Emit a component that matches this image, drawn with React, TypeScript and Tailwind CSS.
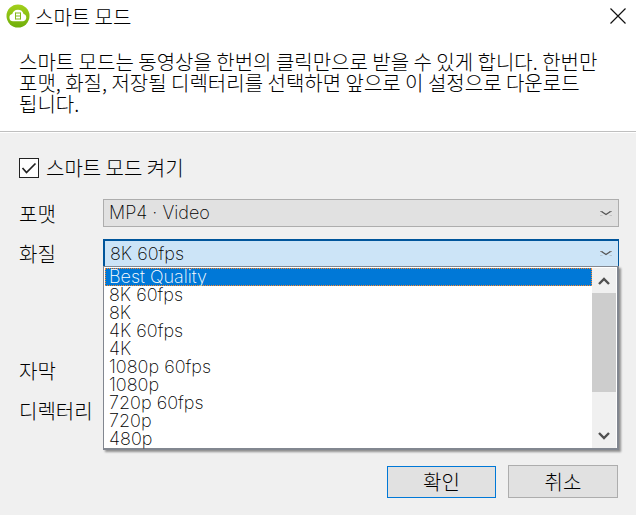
import { useState } from "react";

const qualities = [
    "Best Quality",
    "8K 60fps",
    "8K",
    "4K 60fps",
    "4K",
    "1080p 60fps",
    "1080p",
    "720p 60fps",
    "720p",
    "480p",
];

function Logo() {
    return (
        <svg className="h-6 w-6 shrink-0" viewBox="0 0 24 24" aria-hidden="true">
            <defs>
                <linearGradient id="logo" x1="0" y1="0" x2="0" y2="1">
                    <stop offset="0" stopColor="#a3d01c" />
                    <stop offset="1" stopColor="#6fae0a" />
                </linearGradient>
            </defs>
            <circle cx="12" cy="12" r="11.5" fill="url(#logo)" />
            <path
                d="M7 17.2a3.6 3.6 0 0 1-.8-7.1A5.9 5.9 0 0 1 17.6 10a3.7 3.7 0 0 1-.4 7.2Z"
                fill="#fff"
            />
            <path d="M9.5 8.5v7M14.5 8.5v7M9.5 9h5M9.5 12h5M9.5 15h5" stroke="#83b81b" fill="none" />
        </svg>
    );
}

function ComboArrow() {
    return (
        <svg className="pointer-events-none absolute right-[7px] top-2.5 h-2 w-3" viewBox="0 0 12 8" aria-hidden="true">
            <path d="M0 2.5h2.5M9.5 2.5H12" fill="none" stroke="#999" />
            <path d="M1.5 2.5L6 5.5l4.5-3" fill="none" stroke="#555" strokeWidth="1.3" />
            <path d="M0 6.5h2.5M9.5 6.5H12" fill="none" stroke="#999" strokeOpacity="0.4" />
        </svg>
    );
}

function ScrollArrow({ d }: { d: string }) {
    return (
        <svg className="h-2 w-3" viewBox="0 0 12 8" aria-hidden="true">
            <path d={d} fill="none" stroke="#505050" strokeWidth="2.4" />
        </svg>
    );
}

export default function App() {
    const [enabled, setEnabled] = useState(true);
    const [active, setActive] = useState(0);

    return (
        <div className="flex min-h-screen flex-col bg-[#f0f0f0] font-['Noto_Sans_CJK_KR',sans-serif] text-xl leading-[21px] font-light text-black">
            <header className="border-b border-[#bfbfbf] bg-white pb-[17px]">
                <div className="flex h-8 items-center justify-between pl-1.5 pr-2">
                    <div className="flex items-center gap-[5px]">
                        <Logo />
                        <h1>스마트 모드</h1>
                    </div>
                    <button aria-label="닫기" className="flex h-5 w-5 items-center justify-center">
                        <svg className="h-4 w-4" viewBox="0 0 16 16" aria-hidden="true">
                            <path d="M.5.5l15 15M15.5.5l-15 15" stroke="#111" strokeWidth="1.2" />
                        </svg>
                    </button>
                </div>
                <p className="mt-[19px] pl-[19px] pr-8 break-keep">
                    스마트 모드는 동영상을 한번의 클릭만으로 받을 수 있게 합니다. 한번만 포맷, 화질, 저장될 디렉터리를 선택하면 앞으로 이 설정으로 다운로드 됩니다.
                </p>
            </header>

            <main className="border-t border-white pl-[19px] pr-[17px] pt-6">
                <label className="flex items-center gap-[7px]">
                    <span className="relative flex h-5 w-5 shrink-0">
                        <input
                            type="checkbox"
                            checked={enabled}
                            onChange={(e) => setEnabled(e.target.checked)}
                            className="h-5 w-5 appearance-none border border-[#222] bg-white"
                        />
                        {enabled && (
                            <svg className="pointer-events-none absolute inset-0 h-5 w-5" viewBox="0 0 20 20" aria-hidden="true">
                                <path d="M3.5 10l4 4.5 9-9" fill="none" stroke="#222" strokeWidth="1.7" />
                            </svg>
                        )}
                    </span>
                    스마트 모드 켜기
                </label>

                <div className="mt-[21px] grid grid-cols-[84px_1fr] items-center gap-y-3">
                    <label htmlFor="format">포맷</label>
                    <div className="relative">
                        <select
                            id="format"
                            className="block h-7 w-full appearance-none border border-[#adadad] bg-[#e1e1e1] pl-[5px] font-[Inter,sans-serif] text-lg leading-6 font-extralight"
                        >
                            <option>MP4 · Video</option>
                        </select>
                        <ComboArrow />
                    </div>

                    <label htmlFor="quality">화질</label>
                    <div className="relative">
                        <select
                            id="quality"
                            defaultValue="8K 60fps"
                            className="block h-7 w-full appearance-none border border-t-2 border-l-2 border-[#00559b] bg-[#cce4f7] pl-[5px] font-[Inter,sans-serif] text-lg leading-6 font-extralight"
                        >
                            <option>8K 60fps</option>
                        </select>
                        <ComboArrow />
                        <div className="absolute inset-x-0 top-[27px] z-10 flex border border-r-2 border-b-2 border-[#828790] bg-white px-px pt-px font-[Inter,sans-serif] text-lg leading-[18px] font-extralight shadow-[2px_2px_2px_rgba(0,0,0,0.4)]">
                            <ul role="listbox" aria-label="화질" className="flex-1">
                                {qualities.map((quality, i) => (
                                    <li
                                        key={quality}
                                        role="option"
                                        aria-selected={i === active}
                                        onMouseEnter={() => setActive(i)}
                                        className={
                                            i === active
                                                ? "h-[18px] border border-dotted border-[#ff8728] bg-[#0078d7] pl-[3px] leading-4 text-white"
                                                : "h-[18px] pl-1"
                                        }
                                    >
                                        {quality}
                                    </li>
                                ))}
                            </ul>
                            <div className="flex w-6 flex-col items-center bg-[#f0f0f0]">
                                <div className="flex h-[25px] items-center">
                                    <ScrollArrow d="M1 7l5-5 5 5" />
                                </div>
                                <div className="h-[99px] w-full bg-[#cdcdcd]" />
                                <div className="mt-auto flex h-6 items-center">
                                    <ScrollArrow d="M1 1l5 5 5-5" />
                                </div>
                            </div>
                        </div>
                    </div>

                    <label htmlFor="subtitle" className="mt-[77px]">자막</label>
                    <select
                        id="subtitle"
                        className="mt-[77px] block h-7 w-full appearance-none border border-[#adadad] bg-[#e1e1e1]"
                    />

                    <label htmlFor="directory">디렉터리</label>
                    <input id="directory" className="block h-7 w-full border border-[#7a7a7a] bg-white" />
                </div>

                <div className="mt-[41px] flex items-center justify-end gap-3 pr-px pb-4">
                    <button className="h-8 w-[109px] border border-[#0078d7] bg-[#e1e1e1]">확인</button>
                    <button className="h-[33px] w-[110px] border border-[#adadad] bg-[#e1e1e1]">취소</button>
                </div>
            </main>
        </div>
    );
}
